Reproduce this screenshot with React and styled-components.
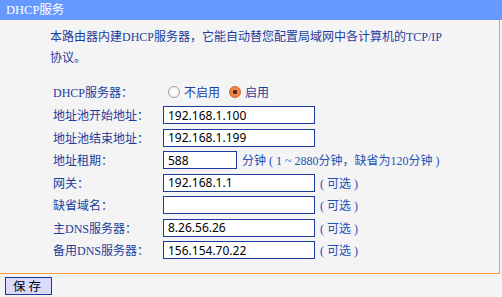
import React from 'react';
import styled, { createGlobalStyle } from 'styled-components';

const GlobalStyle = createGlobalStyle`
  body {
    margin: 0;
    background: #f4f4f4;
    font-family: "Liberation Serif", "Noto Sans CJK SC", serif;
    font-size: 12px;
  }
`;

const Page = styled.div`
  width: 502px;
  height: 297px;
  background: #f4f4f4;
`;

const Header = styled.div`
  height: 20px;
  line-height: 20px;
  padding-left: 6px;
  background: #6699ff;
  color: #fff;
  font-size: 12.5px;
`;

const Panel = styled.div`
  width: 500px;
  box-sizing: border-box;
  border-right: 1px solid #ff9933;
  border-bottom: 1px solid #ff9933;
  padding: 7px 0 11px;
`;

const Intro = styled.p`
  margin: 0;
  padding: 0 52px 0 50px;
  line-height: 21px;
  color: #1b3c9e;
`;

const Form = styled.div`
  margin-top: 11px;
  padding-left: 53px;
`;

const Row = styled.div`
  display: flex;
  align-items: center;
  height: ${p => (p.$tall ? '24px' : '22.5px')};
`;

const Label = styled.div`
  width: 110px;
  color: #1b3c9e;
`;

const Field = styled.input`
  box-sizing: border-box;
  width: ${p => p.$w}px;
  height: 18px;
  margin: 0;
  padding: 0 4px;
  border: 1px solid #1a3aa0;
  background: #fff;
  color: #000;
  font-family: "Noto Sans", sans-serif;
  font-size: 12px;
  outline: none;
`;

const Hint = styled.span`
  margin-left: 5px;
  color: #2450b8;
  white-space: pre;
`;

const RadioOption = styled.label`
  display: flex;
  align-items: center;
  gap: 4px;
  margin-left: ${p => (p.$first ? '5px' : '0')};
  margin-right: 9px;
  color: #1b3c9e;
`;

const RadioDot = styled.span`
  width: 12px;
  height: 12px;
  border-radius: 50%;
  box-sizing: border-box;
  border: 1px solid ${p => (p.$on ? '#d9622a' : '#a0a0a0')};
  background: ${p =>
    p.$on
      ? 'radial-gradient(circle, #5a2a10 0 2px, #f08a52 2.5px, #e8743a 100%)'
      : 'radial-gradient(circle, #ffffff 0, #eeeeee 100%)'};
`;

const Footer = styled.div`
  padding: 3px 0 0 5px;
`;

const SaveButton = styled.button`
  width: 47px;
  height: 18px;
  padding: 0;
  border: 1px solid #1a3aa0;
  background: #dadafc;
  color: #000;
  font-family: "Noto Sans CJK SC", sans-serif;
  font-size: 12.5px;
  letter-spacing: 3px;
  line-height: 16px;
`;

const optional = '( 可选 )';

const fields = [
  { label: '地址池开始地址：', value: '192.168.1.100', w: 152 },
  { label: '地址池结束地址：', value: '192.168.1.199', w: 152 },
  { label: '地址租期：', value: '588', w: 74, hint: '分钟 ( 1 ~ 2880分钟，缺省为120分钟 )' },
  { label: '网关：', value: '192.168.1.1', w: 152, hint: optional },
  { label: '缺省域名：', value: '', w: 152, hint: optional },
  { label: '主DNS服务器：', value: '8.26.56.26', w: 152, hint: optional },
  { label: '备用DNS服务器：', value: '156.154.70.22', w: 152, hint: optional },
];

export default function App() {
  return (
    <Page>
      <GlobalStyle />
      <Header>DHCP服务</Header>
      <Panel>
        <Intro>本路由器内建DHCP服务器，它能自动替您配置局域网中各计算机的TCP/IP协议。</Intro>
        <Form>
          <Row $tall>
            <Label>DHCP服务器：</Label>
            <RadioOption $first><RadioDot />不启用</RadioOption>
            <RadioOption><RadioDot $on />启用</RadioOption>
          </Row>
          {fields.map(f => (
            <Row key={f.label}>
              <Label>{f.label}</Label>
              <Field $w={f.w} defaultValue={f.value} />
              {f.hint && <Hint>{f.hint}</Hint>}
            </Row>
          ))}
        </Form>
      </Panel>
      <Footer>
        <SaveButton>保存</SaveButton>
      </Footer>
    </Page>
  );
}
